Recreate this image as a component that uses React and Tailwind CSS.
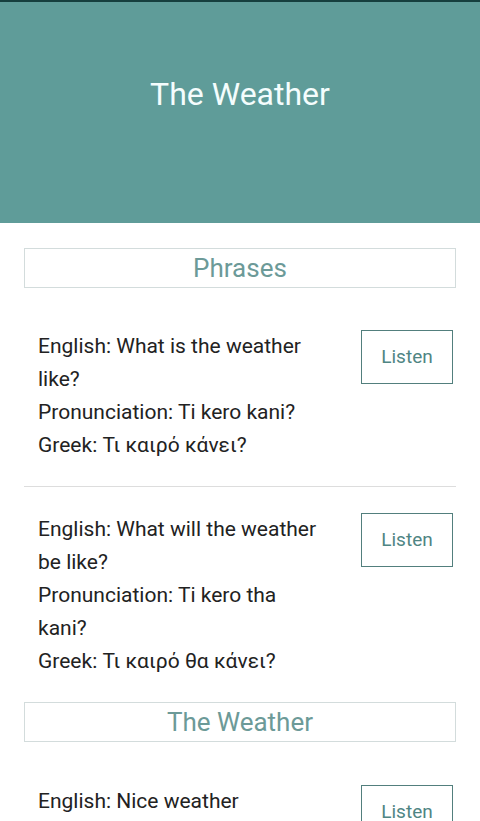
import React from 'react';

const sections = [
  {
    title: 'Phrases',
    items: [
      {
        english: 'What is the weather\nlike?',
        pron: 'Ti kero kani?',
        greek: 'Τι καιρό κάνει?',
      },
      {
        english: 'What will the weather\nbe like?',
        pron: 'Ti kero tha\nkani?',
        greek: 'Τι καιρό θα κάνει?',
      },
    ],
  },
  {
    title: 'The Weather',
    items: [
      {
        english: 'Nice weather',
        pron: 'Kalos keros',
        greek: 'Καλός καιρός',
      },
    ],
  },
];

function Phrase({ item, first, last }) {
  return (
    <div className={`flex items-start pl-[14px] pr-[3px] ${first ? '' : 'pt-[26px]'} ${last ? '' : 'pb-6 border-b border-[#dddddd]'}`}>
      <div className="w-[300px] text-[21px] leading-[33px] text-[#222222] whitespace-pre-line">
        <p>English: {item.english}</p>
        <p>Pronunciation: {item.pron}</p>
        <p>Greek: {item.greek}</p>
      </div>
      <div className="flex-1" />
      <button className="w-[92px] h-[54px] border border-[#527f7d] text-[19px] text-[#4f8583] bg-white">
        Listen
      </button>
    </div>
  );
}

export default function App() {
  return (
    <div className="w-[480px] h-[821px] overflow-hidden bg-white font-['Roboto',sans-serif]">
      <div className="h-[2px] bg-[#163f3e]" />
      <header className="h-[221px] bg-[#5f9c99] flex justify-center pt-[72px]">
        <h1 className="text-[32px] leading-[40px] text-[#f4fdfd]">The Weather</h1>
      </header>
      <main className="px-6 pt-[25px]">
        {sections.map((section, si) => (
          <section key={section.title} className={si === 0 ? '' : 'mt-6'}>
            <div className="h-[40px] border border-[#d3dcdc] flex items-center justify-center text-[26px] text-[#6c9a98]">
              {section.title}
            </div>
            <div className={si === 0 ? 'mt-[42px]' : 'mt-[43px]'}>
              {section.items.map((item, i) => (
                <Phrase
                  key={i}
                  item={item}
                  first={i === 0}
                  last={i === section.items.length - 1}
                />
              ))}
            </div>
          </section>
        ))}
      </main>
    </div>
  );
}
